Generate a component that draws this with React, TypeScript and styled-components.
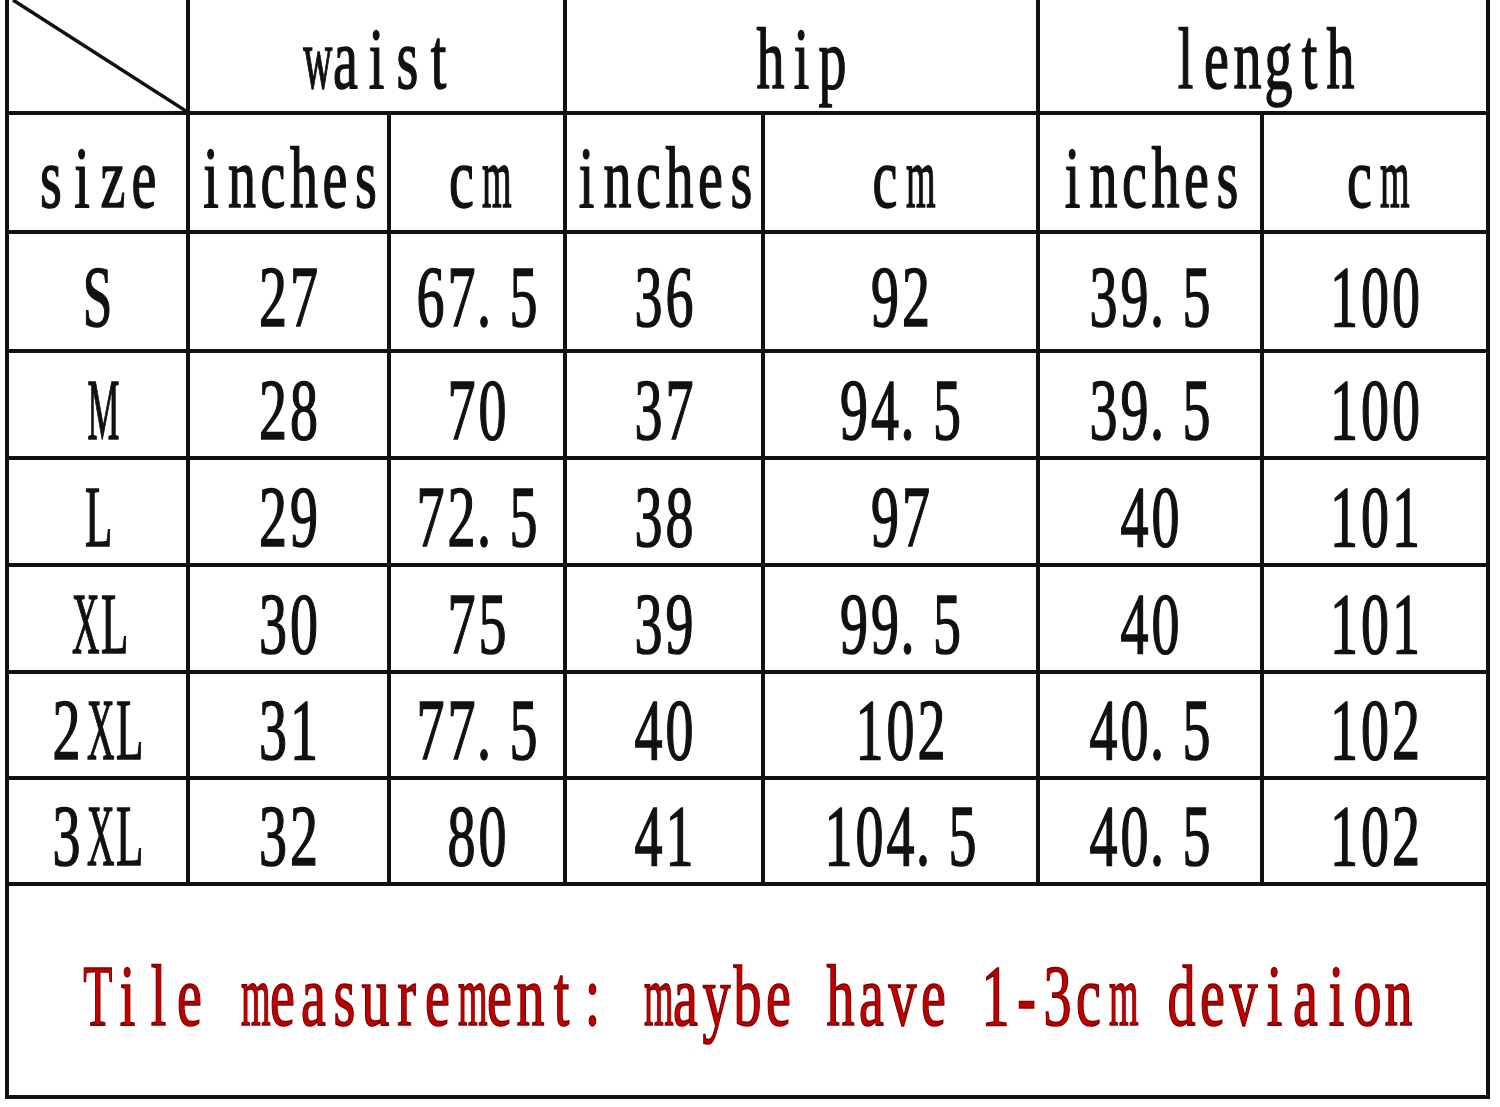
import styled, { createGlobalStyle } from "styled-components";

const GlobalStyle = createGlobalStyle`
  html, body {
    margin: 0;
    padding: 0;
    background: #ffffff;
  }
`;

const Sheet = styled.div`
  display: grid;
  grid-template-columns: 177px 197px 172px 194px 271px 220px 222px;
  grid-template-rows: 111px 115px 115px 103px 103px 103px 102px 102px 209px;
  gap: 4px;
  width: max-content;
  margin-left: 5px;
  padding: 0 4px 4px 4px;
  background: #111111;
`;

const Cell = styled.div<{ $span?: number; $lift?: number }>`
  grid-column: span ${(p) => p.$span ?? 1};
  display: flex;
  align-items: center;
  justify-content: center;
  padding-top: ${(p) => p.$lift ?? 10}px;
  box-sizing: border-box;
  background: #ffffff;
`;

const Corner = styled.div`
  position: relative;
  background: #ffffff;
`;

const Slash = styled.svg`
  position: absolute;
  inset: 0;
  width: 100%;
  height: 100%;
`;

// half-width serif text, like the SimSun chart: each character gets the same advance
const Line = styled.span<{ $red?: boolean }>`
  display: inline-flex;
  font-family: "Liberation Serif", "Times New Roman", serif;
  font-size: 56px;
  line-height: 1;
  color: ${(p) => (p.$red ? "#c00000" : "#111111")};
  -webkit-text-stroke: ${(p) => (p.$red ? "1.1px #800000" : "1px #111111")};
  transform: scaleY(1.53);
  transform-origin: center;
`;

const Glyph = styled.span<{ $squeeze?: number; $align?: string }>`
  display: inline-block;
  width: 31px;
  text-align: ${(p) => p.$align ?? "center"};
  white-space: pre;
  transform: scaleX(${(p) => p.$squeeze ?? 1});
`;

const squeeze: Record<string, number> = {
  m: 0.68,
  w: 0.72,
  M: 0.64,
  X: 0.68,
  T: 0.85,
  L: 0.8,
  S: 0.95,
};

const Mono = ({ text, red }: { text: string; red?: boolean }) => (
  <Line $red={red}>
    {text.split("").map((ch, i) => (
      <Glyph key={i} $squeeze={squeeze[ch]} $align={ch === "." ? "left" : "center"}>
        {ch}
      </Glyph>
    ))}
  </Line>
);

const rows = [
  ["S", "27", "67.5", "36", "92", "39.5", "100"],
  ["M", "28", "70", "37", "94.5", "39.5", "100"],
  ["L", "29", "72.5", "38", "97", "40", "101"],
  ["XL", "30", "75", "39", "99.5", "40", "101"],
  ["2XL", "31", "77.5", "40", "102", "40.5", "102"],
  ["3XL", "32", "80", "41", "104.5", "40.5", "102"],
];

export default function App() {
  return (
    <>
      <GlobalStyle />
      <Sheet>
        <Corner>
          <Slash viewBox="0 0 177 111" preserveAspectRatio="none">
            <line x1="4" y1="0" x2="177" y2="111" stroke="#111111" strokeWidth="3.5" />
          </Slash>
        </Corner>
        <Cell $span={2} $lift={6}>
          <Mono text="waist" />
        </Cell>
        <Cell $span={2} $lift={6}>
          <Mono text="hip" />
        </Cell>
        <Cell $span={2} $lift={6}>
          <Mono text="length" />
        </Cell>

        <Cell>
          <Mono text="size" />
        </Cell>
        {["inches", "cm", "inches", "cm", "inches", "cm"].map((h, i) => (
          <Cell key={i}>
            <Mono text={h} />
          </Cell>
        ))}

        {rows.map((r) =>
          r.map((v, i) => (
            <Cell key={r[0] + i}>
              <Mono text={v} />
            </Cell>
          ))
        )}

        <Cell $span={7}>
          <Mono red text="Tile measurement: maybe have 1-3cm deviaion" />
        </Cell>
      </Sheet>
    </>
  );
}
